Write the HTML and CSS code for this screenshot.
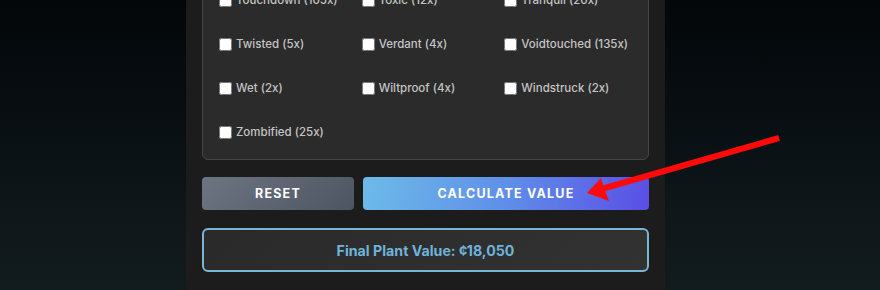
FILE: index.html
```html
<!DOCTYPE html>
<html>
<head>
<meta charset="utf-8">
<link rel="stylesheet" href="styles.css">
</head>
<body>
<div class="page">
  <div class="panel">
    <div class="mutations">
      <label class="opt"><input type="checkbox"><span>Touchdown (105x)</span></label>
      <label class="opt"><input type="checkbox"><span>Toxic (12x)</span></label>
      <label class="opt"><input type="checkbox"><span>Tranquil (20x)</span></label>
      <label class="opt"><input type="checkbox"><span>Twisted (5x)</span></label>
      <label class="opt"><input type="checkbox"><span>Verdant (4x)</span></label>
      <label class="opt"><input type="checkbox"><span>Voidtouched (135x)</span></label>
      <label class="opt"><input type="checkbox"><span>Wet (2x)</span></label>
      <label class="opt"><input type="checkbox"><span>Wiltproof (4x)</span></label>
      <label class="opt"><input type="checkbox"><span>Windstruck (2x)</span></label>
      <label class="opt"><input type="checkbox"><span>Zombified (25x)</span></label>
    </div>
    <div class="actions">
      <button class="btn reset">Reset</button>
      <button class="btn calc">Calculate Value</button>
    </div>
    <div class="result">Final Plant Value: ¢18,050</div>
  </div>
  <svg class="arrow" width="880" height="290" viewBox="0 0 880 290">
    <line x1="779" y1="138" x2="598" y2="190" stroke="#ff0a0a" stroke-width="6" stroke-linecap="butt"/>
    <polygon points="587,193 601,178 604,188 609,201" fill="#ff0a0a"/>
  </svg>
</div>
</body>
</html>
```
FILE: styles.css
```css
* { box-sizing: border-box; }
html, body { margin: 0; padding: 0; }
body {
  width: 880px;
  height: 290px;
  overflow: hidden;
  font-family: Inter, "Liberation Sans", sans-serif;
  background: linear-gradient(180deg, #03070a 0%, #070d10 35%, #0e1619 70%, #121b1e 100%);
}
.page {
  position: relative;
  width: 880px;
  height: 290px;
}
.panel {
  width: 479px;
  margin-left: 186px;
  height: 290px;
  background: #1c1c1c;
  padding: 0 16px;
  display: flex;
  flex-direction: column;
}
.mutations {
  margin-top: -27px;
  border: 1px solid #454545;
  border-radius: 6px;
  background: #2b2b2b;
  padding: 16px 16px 17px 16px;
  display: grid;
  grid-template-columns: repeat(3, 1fr);
  column-gap: 15px;
  row-gap: 24px;
}
.opt {
  display: flex;
  align-items: center;
  gap: 4px;
  height: 20px;
  font-size: 11.5px;
  font-weight: 500;
  color: #c4c4c4;
  white-space: nowrap;
}
.opt input {
  margin: 0;
  width: 13px;
  height: 13px;
}
.actions {
  margin-top: 17px;
  display: flex;
  gap: 9px;
  height: 33px;
}
.btn {
  border: none;
  border-radius: 4px;
  color: #ffffff;
  font-family: Inter, "Liberation Sans", sans-serif;
  font-size: 12.5px;
  font-weight: 700;
  letter-spacing: 1.2px;
  text-transform: uppercase;
  height: 33px;
}
.reset {
  width: 152px;
  background: linear-gradient(135deg, #6d7583 0%, #4d5563 100%);
}
.calc {
  flex: 1;
  background: linear-gradient(100deg, #6dbbe8 0%, #5f8fe8 50%, #5a4ee6 100%);
}
.result {
  margin-top: 18px;
  height: 44px;
  border: 2px solid #79b6d6;
  border-radius: 6px;
  background: linear-gradient(135deg, #2a2a2a 0%, #323232 100%);
  display: flex;
  align-items: center;
  justify-content: center;
  color: #6fb3da;
  font-size: 14.2px;
  font-weight: 700;
}
.arrow {
  position: absolute;
  left: 0;
  top: 0;
  pointer-events: none;
}
```
